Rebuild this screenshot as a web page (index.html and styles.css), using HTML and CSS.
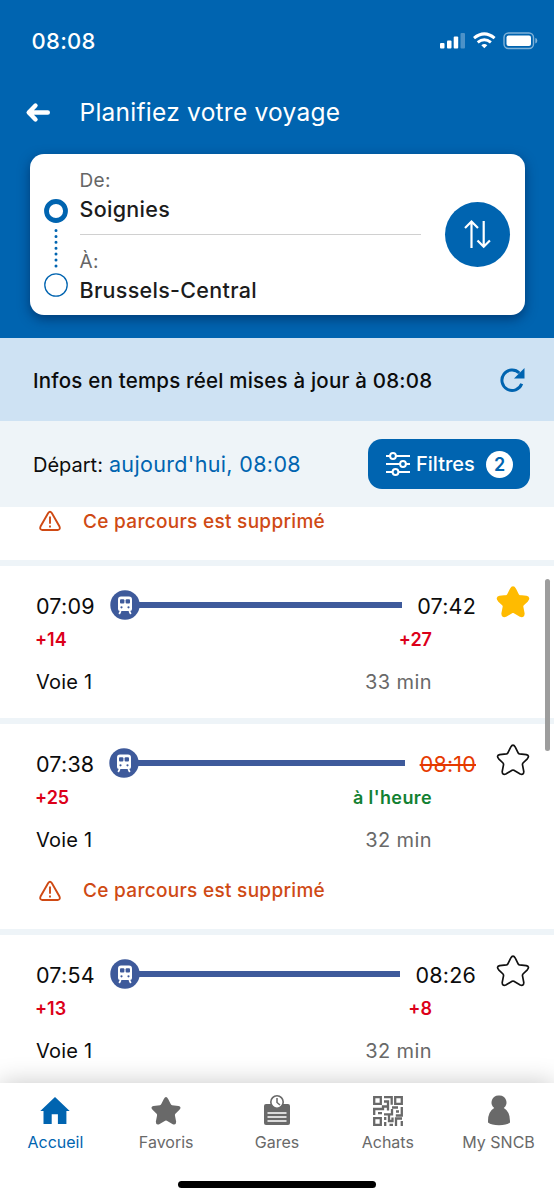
FILE: index.html
```
<!DOCTYPE html>
<html lang="fr">
	<head>
		<meta charset="UTF-8">
		<title>Planifiez votre voyage</title>
		<link rel="stylesheet" href="styles.css">
	</head>
	<body>
		<!-- shared icons -->
		<svg class="defs" width="0" height="0">
			<symbol id="train" viewBox="0 0 30 30">
				<circle cx="15" cy="15" r="14.7" fill="#3e5a9b"/>
				<path d="M11 6.500h8q3 0 3 3v9.500q0 2-2 2H10q-2 0-2-2V9.500q0-3 3-3z" fill="#fff"/>
				<path d="M10.700 21l-1.500 3M19.300 21l1.500 3" stroke="#fff" stroke-width="1.700"/>
				<rect x="10" y="9.300" width="4.400" height="4.200" rx="1" fill="#3e5a9b"/>
				<rect x="15.600" y="9.300" width="4.400" height="4.200" rx="1" fill="#3e5a9b"/>
				<circle cx="11.500" cy="17.300" r="1.100" fill="#3e5a9b"/>
				<circle cx="18.500" cy="17.300" r="1.100" fill="#3e5a9b"/>
			</symbol>
			<symbol id="star" viewBox="0 0 34 34">
				<path d="M14.700 4.200Q17 .2 19.300 4.200L22 9.600Q22.400 10.600 23.500 10.800L30.300 11.600Q34 12.600 31.300 15.800L27 20Q26.300 20.800 26.500 21.800L27.800 28.500Q27.800 32.300 24.200 31L17.900 27.300Q17 26.900 16.100 27.300L9.800 31Q6.200 32.300 6.200 28.500L7.500 21.800Q7.700 20.800 7 20L2.700 15.800Q0 12.600 3.700 11.600L10.500 10.800Q11.600 10.600 12 9.600z"/>
			</symbol>
			<symbol id="warn" viewBox="0 0 24 22">
				<path d="M10.200 3q1.800-2.400 3.600 0l7.700 13.500q1.200 3-1.800 3.500H4.300q-3-.5-1.800-3.500z" fill="none" stroke="#cf4a14" stroke-width="1.900"/>
				<path d="M12 6.500v7.200M12 15.500v2" stroke="#cf4a14" stroke-width="1.900"/>
			</symbol>
		</svg>

		<div class="page">
			<header class="header">
				<div class="status">
					<span class="clock">08:08</span>
					<svg class="status-icons" width="98" height="18" viewBox="0 0 98 18">
						<g fill="#fff">
							<rect x="0" y="11" width="4.500" height="5.500" rx="1"/>
							<rect x="7" y="8.500" width="4.500" height="8" rx="1"/>
							<rect x="13.700" y="4.500" width="4.500" height="12" rx="1"/>
							<rect x="20.500" y="1" width="4.500" height="15.500" rx="1" opacity=".3"/>
							<path d="M44.300 16.200l-3-3q3-2.200 6 0z"/>
							<rect x="66.500" y="3.500" width="24.500" height="10.500" rx="2"/>
							<path d="M95.300 6q2 .3 2 2.700t-2 2.700z" opacity=".5"/>
						</g>
						<g fill="none" stroke="#fff">
							<path d="M34 6.100q10.300-8.500 20.600 0" stroke-width="3"/>
							<path d="M37.700 10.300q6.600-5.300 13.200 0" stroke-width="2.900"/>
							<rect x="64" y="1" width="29.500" height="15.500" rx="4.500" stroke-width="1.400" opacity=".5"/>
						</g>
					</svg>
				</div>
				<div class="title-row">
					<svg width="26" height="22" viewBox="0 0 26 22" fill="none" stroke="#fff" stroke-width="4.400" stroke-linecap="round" stroke-linejoin="round">
						<path d="M22.800 11.500H5M10.500 4.500L3.700 11.500l6.800 7"/>
					</svg>
					<h1>Planifiez votre voyage</h1>
				</div>
				<div class="card">
					<svg class="route" width="24" height="100" viewBox="0 0 24 100" fill="none" stroke="#0064b0">
						<circle cx="12" cy="13" r="9.500" stroke-width="4.800"/>
						<path d="M12 32.500v38" stroke-width="3" stroke-linecap="round" stroke-dasharray="0 5.900"/>
						<circle cx="12" cy="87" r="11.200" stroke-width="1.300"/>
					</svg>
					<div class="stations">
						<div class="station">
							<span class="label">De:</span>
							<span class="name">Soignies</span>
						</div>
						<div class="station">
							<span class="label">À:</span>
							<span class="name">Brussels-Central</span>
						</div>
					</div>
					<div class="swap">
						<svg width="28" height="32" viewBox="0 0 28 32" fill="none" stroke="#fff" stroke-width="2.200">
							<path d="M8.500 30V4M2 10l6.500-6.500L15 10M20.700 3v25M14.500 22.500l6.200 6.200 6.200-6.200"/>
						</svg>
					</div>
				</div>
			</header>

			<div class="info">
				<span>Infos en temps réel mises à jour à 08:08</span>
				<svg width="26" height="26" viewBox="0 0 26 26">
					<path d="M22.700 15.800A10.200 10.200 0 1 1 20.300 5" fill="none" stroke="#0064b0" stroke-width="3"/>
					<path d="M25.500 0v10.500H15z" fill="#0064b0"/>
				</svg>
			</div>

			<div class="filters">
				<span class="depart">Départ:</span>
				<span class="when">aujourd'hui, 08:08</span>
				<div class="button">
					<svg width="24" height="26" viewBox="0 0 24 26" fill="none" stroke="#fff" stroke-width="2">
						<path d="M0 5h4M10 5h14M0 13h14M20 13h4M0 21h6.500M12.500 21H24"/>
						<circle cx="7" cy="5" r="2.900"/>
						<circle cx="17" cy="13" r="2.900"/>
						<circle cx="9.500" cy="21" r="2.900"/>
					</svg>
					<span class="text">Filtres</span>
					<span class="count">2</span>
				</div>
			</div>

			<main class="list">
				<section class="trip">
					<div class="alert"><svg width="24" height="22"><use href="#warn"/></svg>Ce parcours est supprimé</div>
				</section>
				<section class="trip">
					<div class="times">
						<span class="time">07:09</span>
						<svg class="train" width="30" height="30"><use href="#train"/></svg>
						<i class="line"></i>
						<span class="time">07:42</span>
						<svg class="star full" width="34" height="34"><use href="#star"/></svg>
					</div>
					<div class="delays"><span class="late">+14</span><span class="late">+27</span></div>
					<div class="details"><span>Voie 1</span><span class="duration">33 min</span></div>
				</section>
				<section class="trip">
					<div class="times">
						<span class="time">07:38</span>
						<svg class="train" width="30" height="30"><use href="#train"/></svg>
						<i class="line"></i>
						<span class="time cancelled">08:10</span>
						<svg class="star" width="34" height="34"><use href="#star"/></svg>
					</div>
					<div class="delays"><span class="late">+25</span><span class="ontime">à l'heure</span></div>
					<div class="details"><span>Voie 1</span><span class="duration">32 min</span></div>
					<div class="alert"><svg width="24" height="22"><use href="#warn"/></svg>Ce parcours est supprimé</div>
				</section>
				<section class="trip">
					<div class="times">
						<span class="time">07:54</span>
						<svg class="train" width="30" height="30"><use href="#train"/></svg>
						<i class="line"></i>
						<span class="time">08:26</span>
						<svg class="star" width="34" height="34"><use href="#star"/></svg>
					</div>
					<div class="delays"><span class="late">+13</span><span class="late">+8</span></div>
					<div class="details"><span>Voie 1</span><span class="duration">32 min</span></div>
				</section>
				<div class="scrollbar"></div>
			</main>

			<nav class="tabs">
				<div class="tab active">
					<svg width="32" height="32" viewBox="0 0 32 32"><path d="M16 2L1.300 16H4.500v13h8.200V19.300h6.200V29h8.500V16h3.300z"/></svg>
					<span>Accueil</span>
				</div>
				<div class="tab">
					<svg width="32" height="32" viewBox="0 0 34 34"><use href="#star" width="34" height="34"/></svg>
					<span>Favoris</span>
				</div>
				<div class="tab">
					<svg width="32" height="32" viewBox="0 0 32 32">
						<path d="M5 9h22q2 0 2 2v17q0 2-2 2H5q-2 0-2-2V11q0-2 2-2z"/>
						<circle cx="16" cy="7" r="6.200" fill="#fff" stroke="#696969" stroke-width="1.600"/>
						<path d="M16 3v4.500l3 2.500" fill="none" stroke="#696969" stroke-width="1.500"/>
						<path d="M6.500 18h19M6.500 22h19M6.500 26h19" stroke="#fff" stroke-width="1.400"/>
					</svg>
					<span>Gares</span>
				</div>
				<div class="tab">
					<svg width="32" height="32" viewBox="0 0 32 32" fill="none" stroke="#696969" stroke-width="2.300">
						<path d="M2.200 2.200h6.600v6.600H2.200zM23.200 2.200h6.600v6.600h-6.600zM2.200 23.200h6.600v6.600H2.200z"/>
						<path d="M12 2.200h7.700v7.600M12 6.500h4v4.500M1 14h10v-2.500h5v4M2.200 13v7M6 18.200h4M12 19.300h8v-5.300M20 12.500h6M29.800 12v8.500h-6M24 16.500h3M13.200 22v3M13.200 27v4M17 20v6h3.500v-3.500M17.500 29.800h3.500M24 31v-7.500h6M29.800 26v5"/>
					</svg>
					<span>Achats</span>
				</div>
				<div class="tab">
					<svg width="32" height="32" viewBox="0 0 32 32"><path d="M16 .500a7 7 0 0 1 4.800 12.500q6.200 3.500 6.200 13v1.500q-3.500 2.700-11 2.700T5 27.500V26q0-9.500 6.200-13A7 7 0 0 1 16 .500z"/></svg>
					<span>My SNCB</span>
				</div>
				<div class="home-bar"></div>
			</nav>
		</div>
	</body>
</html>
```
FILE: styles.css
```
* {
	margin: 0;
	padding: 0;
	box-sizing: border-box;
}
body {
	font-family: Inter, "Liberation Sans", sans-serif;
	font-size: 20px;
	color: #0c0c0c;
	background-color: #fff;
}
.defs {
	display: block;
	position: absolute;
}
svg {
	display: block;
	flex-shrink: 0;
}
.page {
	display: flex;
	flex-direction: column;
	width: 554px;
	height: 1200px;
	overflow: hidden;
}
.header {
	height: 338px;
	padding: 20px 29.500px 0;
	background-color: #0064b0;
	color: #fff;
}
.status {
	display: flex;
	justify-content: space-between;
	align-items: center;
	height: 41px;
	padding: 0 0 0 2px;
}
.status-icons {
	margin-right: -13px;
}
.clock {
	font-size: 22px;
	font-weight: 500;
	letter-spacing: .3px;
}
.title-row {
	display: flex;
	align-items: center;
	gap: 29px;
	height: 60px;
	margin: 21px 0 11.500px -5px;
}
h1 {
	font-size: 24.500px;
	font-weight: 400;
	letter-spacing: .25px;
}
.card {
	display: flex;
	align-items: center;
	height: 161.500px;
	padding: 0 15px 0 14px;
	border-radius: 14px;
	background-color: #fff;
	color: #1c1c1c;
	box-shadow: 0 4px 12px rgba(0, 20, 60, .5);
}
.route {
	margin: 28px 12px 0 0;
}
.stations {
	width: 341px;
}
.station {
	display: flex;
	flex-direction: column;
	height: 80.500px;
	padding-top: 13px;
}
.station + .station {
	border-top: 1px solid #d0d0d0;
}
.label {
	font-size: 19px;
	line-height: 28px;
	letter-spacing: .4px;
	color: #666;
}
.name {
	font-size: 21.500px;
	font-weight: 500;
	line-height: 28px;
	letter-spacing: .3px;
}
.swap {
	display: flex;
	align-items: center;
	justify-content: center;
	width: 65px;
	height: 65px;
	margin-left: auto;
	border-radius: 50%;
	background-color: #0064b0;
}
.info {
	display: flex;
	justify-content: space-between;
	align-items: center;
	height: 83px;
	padding: 2px 29px 0 33px;
	background-color: #cee2f3;
	font-size: 20.500px;
	font-weight: 500;
	letter-spacing: .2px;
}
.filters {
	display: flex;
	align-items: center;
	height: 86px;
	padding: 0 24px 0 33px;
	background-color: #eef4f8;
}
.when {
	margin-left: 6px;
	font-size: 21.500px;
	letter-spacing: .35px;
	color: #0064b0;
}
.depart {
	padding-top: 1px;
}
.button {
	display: flex;
	align-items: center;
	width: 162px;
	height: 50px;
	margin-left: auto;
	padding: 0 17px 0 18px;
	border-radius: 14px;
	background-color: #0064b0;
	color: #fff;
	font-weight: 500;
}
.text {
	margin-left: 6px;
}
.count {
	width: 27px;
	height: 27px;
	margin-left: auto;
	border-radius: 50%;
	background-color: #fff;
	color: #0064b0;
	font-size: 18px;
	font-weight: 600;
	line-height: 27px;
	text-align: center;
}
.list {
	position: relative;
	flex: 1;
	overflow: hidden;
}
.trip {
	height: 158px;
	padding-top: 20px;
	border-top: 6px solid #eef4f8;
}
.trip:first-child {
	height: 53px;
	padding-top: 0;
	border-top: none;
}
.trip:nth-child(3) {
	height: 211px;
}
.trip:first-child .alert {
	height: 28px;
}
.times {
	display: flex;
	align-items: center;
	height: 39px;
	padding: 0 24px 0 36px;
}
.time {
	font-size: 21.500px;
	letter-spacing: .2px;
}
.cancelled {
	color: #e63900;
	text-decoration: line-through;
}
.train {
	margin: -2px 0 0 15px;
}
.line {
	flex: 1;
	height: 6px;
	margin: -2px 15px 0 -1px;
	background-color: #3e5a9b;
}
.star {
	margin: -7px 0 0 20px;
	fill: none;
	stroke: #111;
	stroke-width: 1.700px;
}
.full {
	fill: #ffbb00;
	stroke: #ffbb00;
}
.delays,
.details {
	display: flex;
	justify-content: space-between;
	align-items: center;
	height: 29px;
	padding: 0 122px 0 35px;
	font-size: 18px;
	font-weight: 600;
}
.details {
	height: 54px;
	padding-top: 2px;
	padding-left: 36px;
	font-size: 20px;
	font-weight: 400;
	letter-spacing: .2px;
}
.late {
	color: #dc0019;
}
.ontime {
	letter-spacing: .4px;
	color: #128132;
}
.duration {
	letter-spacing: .4px;
	color: #696969;
}
.alert {
	display: flex;
	align-items: center;
	gap: 21px;
	height: 49px;
	padding-left: 38px;
	color: #cf4a14;
	font-size: 19px;
	font-weight: 500;
	letter-spacing: .3px;
}
.scrollbar {
	position: absolute;
	top: 72px;
	right: 4.500px;
	width: 5px;
	height: 172px;
	border-radius: 3px;
	background-color: #9d9d9d;
}
.tabs {
	position: relative;
	display: flex;
	height: 117px;
	padding-top: 12px;
	background-color: #fff;
	box-shadow: 0 0 24px rgba(0, 0, 0, .22);
}
.tab {
	display: flex;
	flex: 1;
	flex-direction: column;
	align-items: center;
	fill: #696969;
	color: #696969;
	font-size: 16px;
	line-height: 30px;
}
.active {
	fill: #0064b0;
	color: #0064b0;
}
.home-bar {
	position: absolute;
	bottom: 12px;
	left: 178px;
	width: 198px;
	height: 7px;
	border-radius: 4px;
	background-color: #000;
}
```
